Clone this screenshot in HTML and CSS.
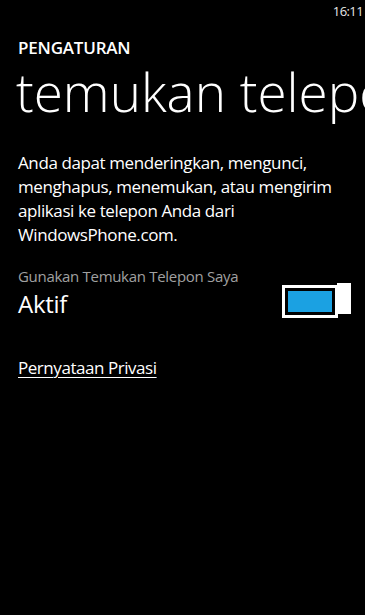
FILE: index.html
```html
<!DOCTYPE html>
<html lang="id">
<head>
<meta charset="utf-8">
<title>temukan telepon saya</title>
<link rel="stylesheet" href="styles.css">
</head>
<body>
<div class="phone">
  <div class="status-bar"><span class="clock">16:11</span></div>
  <header class="header">
    <div class="app-title">PENGATURAN</div>
    <h1 class="page-title">temukan telepon saya</h1>
  </header>
  <main class="content">
    <p class="desc">Anda dapat menderingkan, mengunci, menghapus, menemukan, atau mengirim aplikasi ke telepon Anda dari WindowsPhone.com.</p>
    <div class="setting-label">Gunakan Temukan Telepon Saya</div>
    <div class="setting-row">
      <span class="setting-value">Aktif</span>
      <div class="toggle">
        <div class="toggle-track"><div class="toggle-fill"></div></div>
        <div class="toggle-thumb"></div>
      </div>
    </div>
    <a class="privacy" href="#">Pernyataan Privasi</a>
  </main>
</div>
</body>
</html>
```

FILE: styles.css
```css
html, body {
  margin: 0;
  padding: 0;
  background: #000;
}
body {
  font-family: "Open Sans", "Noto Sans", sans-serif;
  color: #fff;
}
.phone {
  width: 365px;
  height: 615px;
  overflow: hidden;
  background: #000;
}
.status-bar {
  height: 24px;
  display: flex;
  justify-content: flex-end;
  align-items: flex-start;
  padding-right: 2px;
}
.clock {
  font-size: 13px;
  line-height: 16px;
  margin-top: 3px;
  letter-spacing: -0.6px;
  color: #e8e8e8;
}
.header {
  padding-left: 18px;
}
.app-title {
  font-size: 17px;
  font-weight: 600;
  line-height: 18px;
  margin-top: 15.4px;
  letter-spacing: -0.2px;
}
.page-title {
  margin: 3px 0 0 -2px;
  font-size: 53px;
  font-weight: 300;
  line-height: 64px;
  letter-spacing: 0;
  white-space: nowrap;
  overflow: hidden;
}
.content {
  padding: 0 14px 0 18px;
}
.desc {
  margin: 27px 0 0;
  font-size: 17px;
  line-height: 24px;
  letter-spacing: -0.4px;
  width: 330px;
}
.setting-label {
  margin-top: 18.8px;
  font-size: 15px;
  line-height: 20px;
  letter-spacing: -0.3px;
  color: #a0a0a0;
}
.setting-row {
  display: flex;
  justify-content: space-between;
  align-items: flex-start;
}
.setting-value {
  margin-top: 2.5px;
  font-size: 24px;
  line-height: 30px;
  letter-spacing: -0.3px;
}
.toggle {
  position: relative;
  width: 69px;
  height: 31px;
  margin-top: -3px;
}
.toggle-track {
  margin-top: 2px;
  width: 44px;
  height: 21px;
  border: 3px solid #fff;
  padding: 3px;
  box-sizing: content-box;
  background: #000;
}
.toggle-fill {
  width: 100%;
  height: 100%;
  background: #1ba1e2;
}
.toggle-thumb {
  position: absolute;
  right: 0;
  top: 0;
  width: 14px;
  height: 31px;
  background: #fff;
}
.privacy {
  display: inline-block;
  margin-top: 37px;
  font-size: 17px;
  line-height: 24px;
  letter-spacing: -0.45px;
  color: #fff;
  text-decoration: underline;
  text-underline-offset: 3px;
  text-decoration-thickness: 1px;
}
```
